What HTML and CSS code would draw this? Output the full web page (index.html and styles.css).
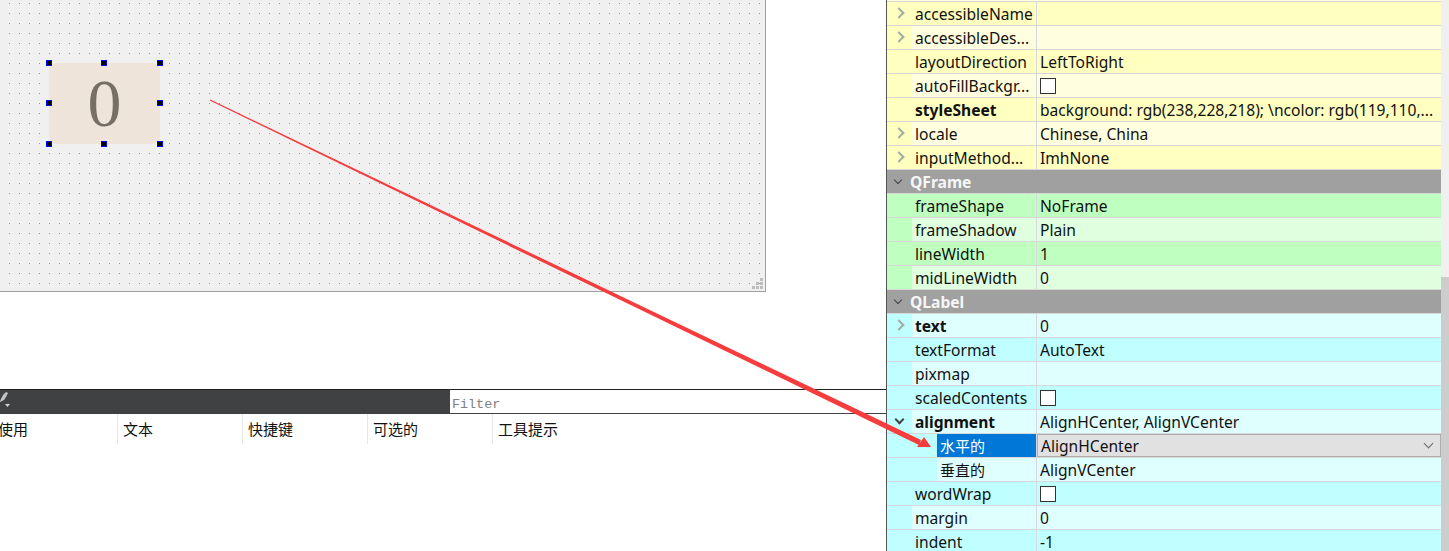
FILE: index.html
```html
<!DOCTYPE html>
<html lang="en">
<head>
    <meta charset="UTF-8">
    <title>Qt Designer</title>
    <link rel="stylesheet" href="styles.css">
</head>
<body>
    <div class="left">
        <div class="canvas-area">
            <div class="form">
                <div class="label-wrap">
                    <div class="tile">0</div>
                    <i class="h tl"></i><i class="h tm"></i><i class="h tr"></i>
                    <i class="h ml"></i><i class="h mr"></i>
                    <i class="h bl"></i><i class="h bm"></i><i class="h br"></i>
                </div>
                <svg class="grip" width="12" height="12" viewBox="0 0 12 12">
                    <path d="M9 0h3v3H9zM5 4h3v3H5zM9 4h3v3H9zM1 8h3v3H1zM5 8h3v3H5zM9 8h3v3H9z" fill="#bdbdbd"/>
                </svg>
            </div>
        </div>
        <div class="action-editor">
            <div class="toolbar">
                <svg class="tool-icon" width="10" height="18" viewBox="0 0 10 18">
                    <path d="M0 11 3 5 6 2 8 3 6 7 4 10 0 12z" fill="#c4c4c4"/>
                    <path d="M5 14h5l-2.500 3z" fill="#d5d5d5"/>
                </svg>
                <input class="filter" placeholder="Filter">
            </div>
            <div class="columns">
                <div class="col col-use">使用</div>
                <div class="col">文本</div>
                <div class="col">快捷键</div>
                <div class="col">可选的</div>
                <div class="col">工具提示</div>
            </div>
        </div>
    </div>

    <div class="props">
        <div class="list">
            <div class="row y2 top-sliver"></div>
            <div class="row y1"><span class="arrow"><i class="closed"></i></span><span class="name">accessibleName</span><span class="val"></span></div>
            <div class="row y2"><span class="arrow"><i class="closed"></i></span><span class="name">accessibleDes...</span><span class="val"></span></div>
            <div class="row y1"><span class="arrow"></span><span class="name">layoutDirection</span><span class="val">LeftToRight</span></div>
            <div class="row y2"><span class="arrow"></span><span class="name">autoFillBackgr...</span><span class="val"><i class="check"></i></span></div>
            <div class="row y1"><span class="arrow"></span><span class="name bold">styleSheet</span><span class="val">background: rgb(238,228,218); \ncolor: rgb(119,110,...</span></div>
            <div class="row y2"><span class="arrow"><i class="closed"></i></span><span class="name">locale</span><span class="val">Chinese, China</span></div>
            <div class="row y1"><span class="arrow"><i class="closed"></i></span><span class="name">inputMethod...</span><span class="val">ImhNone</span></div>
            <div class="group"><span class="caret"><i class="open"></i></span>QFrame</div>
            <div class="row g1"><span class="arrow"></span><span class="name">frameShape</span><span class="val">NoFrame</span></div>
            <div class="row g2"><span class="arrow"></span><span class="name">frameShadow</span><span class="val">Plain</span></div>
            <div class="row g1"><span class="arrow"></span><span class="name">lineWidth</span><span class="val">1</span></div>
            <div class="row g2"><span class="arrow"></span><span class="name">midLineWidth</span><span class="val">0</span></div>
            <div class="group"><span class="caret"><i class="open"></i></span>QLabel</div>
            <div class="row c2"><span class="arrow"><i class="closed"></i></span><span class="name bold">text</span><span class="val">0</span></div>
            <div class="row c1"><span class="arrow"></span><span class="name">textFormat</span><span class="val">AutoText</span></div>
            <div class="row c2"><span class="arrow"></span><span class="name">pixmap</span><span class="val"></span></div>
            <div class="row c1"><span class="arrow"></span><span class="name">scaledContents</span><span class="val"><i class="check"></i></span></div>
            <div class="row c2"><span class="arrow"><i class="open big"></i></span><span class="name bold">alignment</span><span class="val">AlignHCenter, AlignVCenter</span></div>
            <div class="row c1 sub"><span class="arrow"></span><span class="name selected">水平的</span><span class="val combo">AlignHCenter<i class="open thin"></i></span></div>
            <div class="row c2 sub"><span class="arrow"></span><span class="name">垂直的</span><span class="val">AlignVCenter</span></div>
            <div class="row c1"><span class="arrow"></span><span class="name">wordWrap</span><span class="val"><i class="check"></i></span></div>
            <div class="row c2"><span class="arrow"></span><span class="name">margin</span><span class="val">0</span></div>
            <div class="row c1"><span class="arrow"></span><span class="name">indent</span><span class="val">-1</span></div>
        </div>
        <div class="scroll"><div class="thumb"></div></div>
    </div>

    <svg class="annotation" width="1449" height="551" viewBox="0 0 1449 551">
        <path d="M210.300 99.500 921 440 919 445 209.700 100.500z" fill="#f63c3c"/>
        <path d="M931 447 917 447 924 437z" fill="#f63c3c"/>
    </svg>
</body>
</html>
```

FILE: styles.css
```css
* {
    box-sizing: border-box;
}

html, body {
    margin: 0;
    height: 551px;
    overflow: hidden;
}

body {
    position: relative;
    display: flex;
    background: #fff;
    font-family: "Noto Sans", "Open Sans", "Noto Sans CJK SC", sans-serif;
    font-size: 15.6px;
    color: #111;
}

.left {
    width: 886px;
    flex: none;
    display: flex;
    flex-direction: column;
}

.canvas-area {
    height: 389px;
}

.form {
    position: relative;
    width: 766px;
    height: 292px;
    padding: 63px 0 0 49px;
    background-color: #f0f0f0;
    background-image: conic-gradient(from 270deg at 1px 1px, #969696 25%, transparent 0);
    background-size: 10px 10px;
    background-position: 9px 3px;
    border-right: 1px solid #a0a0a0;
    border-bottom: 1px solid #a0a0a0;
}

.label-wrap {
    position: relative;
    width: 111px;
    height: 81px;
}

.tile {
    width: 100%;
    height: 100%;
    display: flex;
    align-items: center;
    justify-content: center;
    background: #eee4da;
    border-radius: 8px;
    color: #776e65;
    font-family: "Liberation Serif", serif;
    font-size: 68px;
}

.h {
    position: absolute;
    width: 6px;
    height: 6px;
    background: #000;
    border: 1px solid #0000ff;
}

.tl { left: -3px; top: -3px; }
.tm { left: 52px; top: -3px; }
.tr { left: 108px; top: -3px; }
.ml { left: -3px; top: 37px; }
.mr { left: 108px; top: 37px; }
.bl { left: -3px; top: 78px; }
.bm { left: 52px; top: 78px; }
.br { left: 108px; top: 78px; }

.grip {
    position: absolute;
    right: 2px;
    bottom: 1px;
}

.action-editor {
    border-top: 1px solid #222;
}

.toolbar {
    height: 24px;
    display: flex;
    justify-content: space-between;
    background: #404143;
}

.filter {
    width: 436px;
    height: 23px;
    padding: 5px 2px 0;
    border: 0;
    background: #fff;
    font-family: "Liberation Mono", monospace;
    font-size: 13.4px;
}

.filter::placeholder {
    color: #808080;
    opacity: 1;
}

.columns {
    display: flex;
    height: 30px;
}

.col {
    width: 125px;
    padding-left: 5px;
    line-height: 29px;
    font-family: "Noto Sans CJK SC", sans-serif;
    font-size: 15px;
    border-right: 1px solid #e8e8e8;
}

.col-use {
    width: 118px;
    padding-left: 0;
    text-indent: -2px;
}

.col:last-child {
    border-right: 0;
}

.props {
    flex: 1;
    display: flex;
    border-left: 1px solid #555;
}

.list {
    flex: 1;
}

.row {
    display: flex;
    height: 24px;
    border-bottom: 1px solid #d8d8d8;
    line-height: 24px;
}

.top-sliver {
    height: 2px;
}

.arrow {
    width: 25px;
    flex: none;
    display: flex;
    align-items: center;
    justify-content: center;
    padding-right: 2px;
}

.closed {
    width: 8px;
    height: 8px;
    margin-top: -1px;
    border-top: 2px solid #a6acac;
    border-right: 2px solid #a6acac;
    transform: rotate(45deg);
}

.open {
    display: block;
    width: 6px;
    height: 6px;
    border-right: 1.500px solid #444;
    border-bottom: 1.500px solid #444;
    transform: rotate(45deg);
}

.open.big {
    width: 7px;
    height: 7px;
    margin-top: -4px;
    margin-left: 1px;
    border-width: 2px;
}

.open.thin {
    width: 7px;
    height: 7px;
    margin-top: 5px;
    border-width: 1px;
    border-color: #666;
}

.name {
    width: 125px;
    flex: none;
    padding-left: 3px;
    white-space: nowrap;
    overflow: hidden;
    border-right: 1px solid #d8d8e0;
}

.bold {
    font-weight: 700;
}

.val {
    flex: 1;
    padding-left: 3px;
    white-space: nowrap;
    overflow: hidden;
}

.y1 { background: #ffffbf; }
.y2 { background: #ffffdf; }
.g1 { background: #bfffbf; }
.g2 { background: #dfffdf; }
.c1 { background: #bfffff; }
.c2 { background: #dfffff; }

/* the branch column keeps the darker shade on every row */
.y2 .arrow { background: #ffffbf; }
.g2 .arrow { background: #bfffbf; }
.c2 .arrow { background: #bfffff; }

.sub .arrow {
    width: 50px;
}

.sub .name {
    width: 100px;
    font-family: "Noto Sans CJK SC", sans-serif;
    font-size: 15px;
}

.row .selected {
    background: #0078d7;
    color: #fff;
}

.combo {
    display: flex;
    justify-content: space-between;
    padding-right: 8px;
    line-height: 23px;
    background: #e1e1e1;
    border: 1px solid #adadad;
}

.check {
    display: block;
    width: 16px;
    height: 16px;
    margin-top: 4px;
    background: #fff;
    border: 1px solid #333;
}

.group {
    display: flex;
    height: 24px;
    background: #a0a0a0;
    border-bottom: 1px solid #d8d8d8;
    color: #f6f6f6;
    font-weight: 700;
    line-height: 24px;
}

.caret {
    width: 21px;
    margin-right: 2px;
    display: flex;
    align-items: center;
    justify-content: center;
    padding-bottom: 4px;
}

.scroll {
    width: 8px;
    flex: none;
    padding-top: 277px;
    background: #f0f0f0;
}

.thumb {
    height: 274px;
    background: #cdcdcd;
}

.annotation {
    position: absolute;
    left: 0;
    top: 0;
    pointer-events: none;
}
```
